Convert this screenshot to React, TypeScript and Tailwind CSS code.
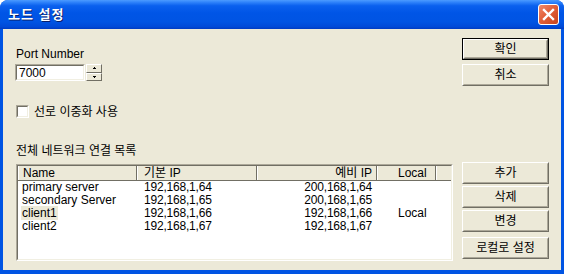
import React from "react";

const FONT = { fontFamily: "'Liberation Sans','Noto Sans CJK KR',sans-serif" };

function Btn({ label, def = false, className = "" }: { label: string; def?: boolean; className?: string }) {
  return (
    <div className={`w-[87px] h-[22px] ${def ? "border border-black" : ""} ${className}`}>
      <div className="w-full h-full border border-t-white border-l-white border-r-[#716F64] border-b-[#716F64]">
        <div className="w-full h-full border border-t-[#ECE9D8] border-l-[#ECE9D8] border-r-[#ACA899] border-b-[#ACA899] flex items-center justify-center text-[12px] leading-none text-black">
          {label}
        </div>
      </div>
    </div>
  );
}

function Sunken({ className = "", children }: { className?: string; children?: React.ReactNode }) {
  return (
    <div className={`border border-t-[#ACA899] border-l-[#ACA899] border-r-white border-b-white ${className}`}>
      <div className="w-full h-full border border-t-[#716F64] border-l-[#716F64] border-r-[#F1EFE2] border-b-[#F1EFE2] bg-white">
        {children}
      </div>
    </div>
  );
}

function HeaderCell({ label, w, align = "left", pl = 4, pr = 4 }: { label: string; w: number; align?: "left" | "right"; pl?: number; pr?: number }) {
  return (
    <div
      className={`h-full flex items-center shrink-0 border-l border-l-white border-r border-r-[#716F64] ${align === "right" ? "justify-end" : "justify-start"}`}
      style={{ width: w, paddingLeft: pl, paddingRight: pr }}
    >
      <span className="text-[12px] leading-none">{label}</span>
    </div>
  );
}

const rows = [
  { name: "primary server", ip: "192,168,1,64", bak: "200,168,1,64", local: "" },
  { name: "secondary Server", ip: "192,168,1,65", bak: "200,168,1,65", local: "" },
  { name: "client1", ip: "192,168,1,66", bak: "192,168,1,66", local: "Local", sel: true },
  { name: "client2", ip: "192,168,1,67", bak: "192,168,1,67", local: "" },
];

export default function App() {
  return (
    <div className="w-[564px] h-[274px] bg-white" style={FONT}>
      <div className="w-[564px] h-[274px] flex flex-col bg-[#0054E3] rounded-t-[8px] overflow-hidden">
        {/* Title bar */}
        <div className="h-[29px] shrink-0 flex items-center pl-[8px] pr-[5px] bg-[linear-gradient(to_bottom,#4C9BFF_0%,#2E82FA_8%,#0A60EE_20%,#0055E6_45%,#0054E3_75%,#004AD8_92%,#003BC2_100%)]">
          <span className="text-white font-bold text-[13px] leading-none tracking-[1px] [text-shadow:1px_1px_0_#0A1E6A]">노드 설정</span>
          <div className="ml-auto w-[21px] h-[21px] rounded-[3px] border border-white bg-[linear-gradient(135deg,#F08A6B_0%,#E2603A_45%,#C8431C_100%)] flex items-center justify-center">
            <svg width="13" height="13" viewBox="0 0 13 13">
              <path d="M2 2 L11 11 M11 2 L2 11" stroke="white" strokeWidth="2.4" strokeLinecap="square" />
            </svg>
          </div>
        </div>
        {/* Body */}
        <div className="flex-1 mx-[3px] mb-[4px] bg-[#ECE9D8] flex text-black">
          {/* Left column */}
          <div className="flex-1 flex flex-col pl-[13px] pt-[19px]">
            <div className="text-[12px] leading-[12px]">Port Number</div>
            <div className="flex mt-[4px]">
              <Sunken className="w-[70px] h-[17px] -ml-[1px]">
                <div className="h-full flex items-center pl-[2px] text-[12px] leading-none">7000</div>
              </Sunken>
              <div className="ml-[1px] w-[16px] h-[17px] flex flex-col">
                {["up", "down"].map((d) => (
                  <div key={d} className="h-[8.5px] w-full bg-[#ECE9D8] border border-t-white border-l-white border-r-[#716F64] border-b-[#716F64] flex items-center justify-center">
                    <svg width="3" height="2" viewBox="0 0 3 2">
                      {d === "up" ? <path d="M1 0 H2 V1 H3 V2 H0 V1 H1Z" fill="black" /> : <path d="M0 0 H3 V1 H2 V2 H1 V1 H0Z" fill="black" />}
                    </svg>
                  </div>
                ))}
              </div>
            </div>
            <div className="flex items-center mt-[24px] h-[13px]">
              <Sunken className="w-[13px] h-[13px]" />
              <span className="ml-[5px] text-[12px] leading-none">선로 이중화 사용</span>
            </div>
            <div className="mt-[27px] text-[12px] leading-[12px]">전체 네트워크 연결 목록</div>
            <Sunken className="mt-[7px] w-[437px] h-[97px]">
              <div className="w-full h-full flex flex-col">
                <div className="h-[15px] flex bg-[#ECE9D8] border-b border-b-[#716F64]">
                  <HeaderCell label="Name" w={119} pl={4} />
                  <HeaderCell label="기본 IP" w={120} pl={6} />
                  <HeaderCell label="예비 IP" w={120} align="right" pr={4} />
                  <HeaderCell label="Local" w={59} pl={20} />
                  <div className="flex-1 h-full border-l border-l-white" />
                </div>
                <div className="flex flex-col">
                  {rows.map((r) => (
                    <div key={r.name} className="h-[13px] flex text-[12px] leading-[13px]">
                      <div className="w-[119px] pl-[3px] shrink-0">
                        <span className={`px-[1px] ${r.sel ? "bg-[#ECE9D8]" : ""}`}>{r.name}</span>
                      </div>
                      <div className="w-[120px] pl-[7px] shrink-0 tracking-[-0.2px]">{r.ip}</div>
                      <div className="w-[120px] pr-[5px] shrink-0 text-right tracking-[-0.2px]">{r.bak}</div>
                      <div className="w-[59px] pl-[21px] shrink-0">{r.local}</div>
                    </div>
                  ))}
                </div>
              </div>
            </Sunken>
          </div>
          {/* Right column */}
          <div className="w-[87px] mr-[12px] flex flex-col pt-[9px]">
            <Btn label="확인" def />
            <Btn label="취소" className="mt-[4px]" />
            <Btn label="추가" className="mt-[76px]" />
            <Btn label="삭제" className="mt-[2px]" />
            <Btn label="변경" className="mt-[2px]" />
            <Btn label="로컬로 설정" className="mt-[5px]" />
          </div>
        </div>
      </div>
    </div>
  );
}
